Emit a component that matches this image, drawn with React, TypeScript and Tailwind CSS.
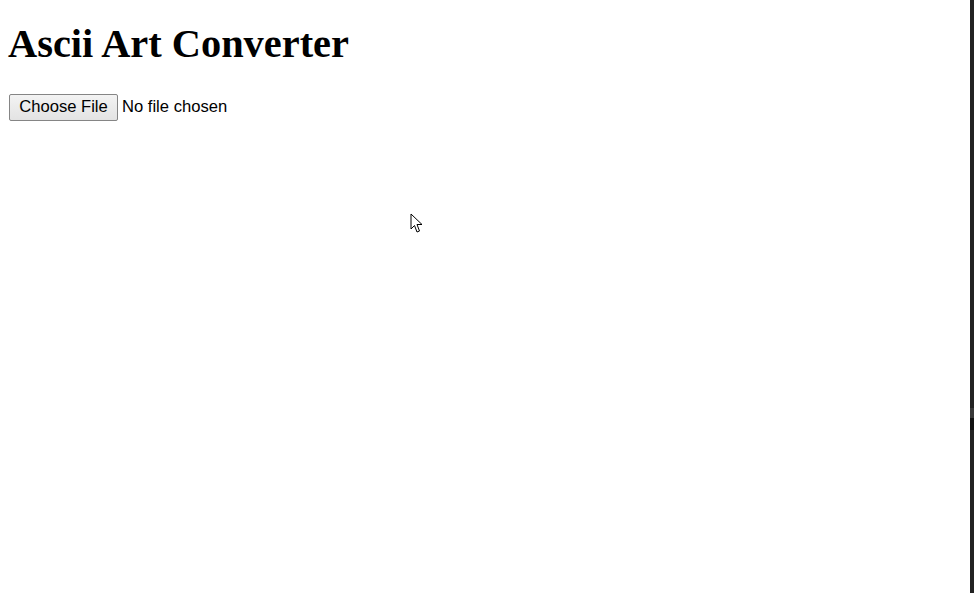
export default function App() {
  return (
    <div className="relative flex h-[593px] w-[974px] overflow-hidden bg-white text-black">
      <div className="flex-1 p-2">
        <h1 className="mt-[13px] mb-[27px] text-[40.4px] font-bold leading-[46px] font-['Liberation_Serif',serif]">
          Ascii Art Converter
        </h1>
        <div className="flex items-center gap-1 font-['Liberation_Sans',Arial,sans-serif] text-[16.6px]">
          <span className="ml-px flex h-[27px] w-[109px] items-center justify-center rounded-[2px] border border-[#858585] bg-gradient-to-b from-[#f3f3f3] to-[#e3e3e3]">
            Choose File
          </span>
          <span>No file chosen</span>
        </div>
      </div>
      <div className="flex w-[4px] flex-col bg-[#222222]">
        <div className="mt-[408px] h-[10px] bg-[#383838]" />
        <div className="h-[12px] bg-[#111111]" />
      </div>
      <svg className="absolute left-[410px] top-[213px]" width="14" height="21" viewBox="0 0 14 21">
        <path d="M1 1 L1 16 L4.5 12.5 L7 19 L9.5 18 L7 11.5 L12 11.5 Z" fill="white" stroke="black" strokeWidth="1" strokeLinejoin="round" />
      </svg>
    </div>
  );
}
